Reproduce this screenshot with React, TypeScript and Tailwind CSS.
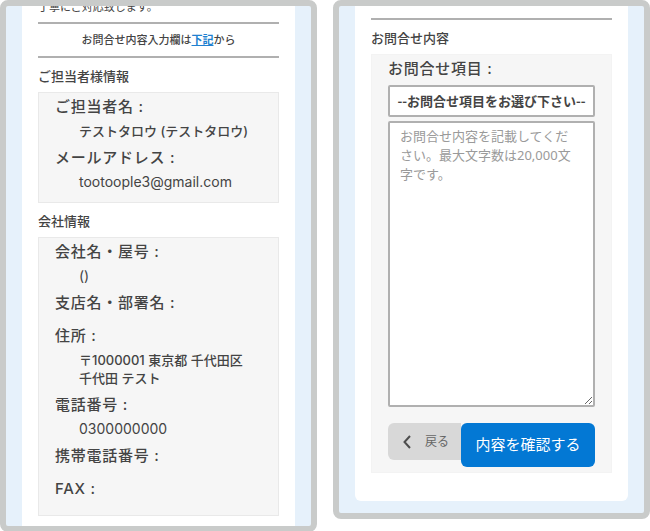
import type { ReactNode } from "react";

type Field = { label: string; value?: string; latin?: boolean };

const CONTACT_FIELDS: Field[] = [
  { label: "ご担当者名 :", value: "テストタロウ (テストタロウ)" },
  { label: "メールアドレス :", value: "tootoople3@gmail.com", latin: true },
];

const COMPANY_FIELDS: Field[] = [
  { label: "会社名・屋号 :", value: "()", latin: true },
  { label: "支店名・部署名 :" },
  { label: "住所 :", value: "〒1000001 東京都 千代田区千代田 テスト" },
  { label: "電話番号 :", value: "0300000000", latin: true },
  { label: "携帯電話番号 :" },
  { label: "FAX :" },
];

function Screen({ children }: { children: ReactNode }) {
  return (
    <section className="flex-1 min-w-0 overflow-hidden rounded-lg border-6 border-[#c9cbca] bg-[#e6f1fb] px-4">
      {children}
    </section>
  );
}

function FieldList({ fields }: { fields: Field[] }) {
  return (
    <dl className="border border-[#e9e9e9] bg-[#f6f6f6] px-4 pt-px pb-1.5">
      {fields.map((f) => (
        <div key={f.label}>
          <dt className="text-[15px] leading-[26px] font-medium tracking-wider">{f.label}</dt>
          <dd
            className={`pl-6 pr-2 pt-[2px] pb-[5px] leading-[18px] ${f.latin ? "text-sm" : "text-[13px] font-medium"}`}
          >
            {f.value}
          </dd>
        </div>
      ))}
    </dl>
  );
}

export default function App() {
  return (
    <main className="flex items-start gap-4 bg-white font-['Inter','Noto_Sans_CJK_JP',sans-serif] text-[#444]">
      {/* Customer details */}
      <Screen>
        <div className="bg-white px-4 pb-2.5">
          <p className="-mt-2 pb-1.5 text-[11px] leading-[18px]">丁寧にご対応致します。</p>
          <p className="border-y-2 border-[#b0b0b0] text-center text-[11px] leading-[32px] font-medium">
            お問合せ内容入力欄は
            <a href="#inquiry" className="font-bold text-[#2080d0] underline">
              下記
            </a>
            から
          </p>
          <h2 className="pt-1.5 pb-1 text-[13px] leading-[24px] font-medium">ご担当者様情報</h2>
          <FieldList fields={CONTACT_FIELDS} />
          <h2 className="pt-1.5 pb-1 text-[13px] leading-[24px] font-medium">会社情報</h2>
          <FieldList fields={COMPANY_FIELDS} />
        </div>
      </Screen>

      {/* Inquiry form */}
      <Screen>
        <form
          id="inquiry"
          className="mb-3 rounded-b-md bg-white px-4 pt-3 pb-7"
          onSubmit={(e) => e.preventDefault()}
        >
          <h2 className="border-t-2 border-[#b0b0b0] pt-1.5 pb-1 text-[13px] leading-[24px] font-medium">
            お問合せ内容
          </h2>
          <div className="border border-[#f3f3f3] bg-[#f6f6f6] px-4 pt-px pb-[5px]">
            <label htmlFor="topic" className="block pb-[3px] text-[15px] leading-[26px] font-medium tracking-wider">
              お問合せ項目 :
            </label>
            <select
              id="topic"
              className="block h-8 w-full appearance-none rounded-xs border-2 border-[#b0b0b0] bg-white px-1.5 text-center font-['Noto_Sans_CJK_JP',sans-serif] text-[13px] font-bold"
            >
              <option>--お問合せ項目をお選び下さい--</option>
            </select>
            <textarea
              aria-label="お問合せ内容"
              placeholder="お問合せ内容を記載してください。最大文字数は20,000文字です。"
              className="mt-1 block h-[286px] w-full rounded-xs border-2 border-[#b0b0b0] bg-white py-1 pr-3.5 pl-2.5 font-['Noto_Sans','Noto_Sans_CJK_JP',sans-serif] text-[13px] leading-[19px] placeholder:text-[#9a9a9a]"
            />
            <div className="mt-4 flex items-start">
              <button
                type="button"
                className="flex h-[37px] flex-1 items-center justify-between rounded-l-md bg-[#d8d8d8] pr-3 pl-[15px] text-xs text-[#666]"
              >
                <svg viewBox="0 0 8 14" className="h-[14px] w-2" fill="none" stroke="#4d4d4d" strokeWidth="2">
                  <path d="M7 1 1.5 7 7 13" />
                </svg>
                戻る
              </button>
              <button
                type="submit"
                className="h-11 w-[134px] rounded-md bg-[#0378d4] text-[15px] whitespace-nowrap text-white"
              >
                内容を確認する
              </button>
            </div>
          </div>
        </form>
      </Screen>
    </main>
  );
}
